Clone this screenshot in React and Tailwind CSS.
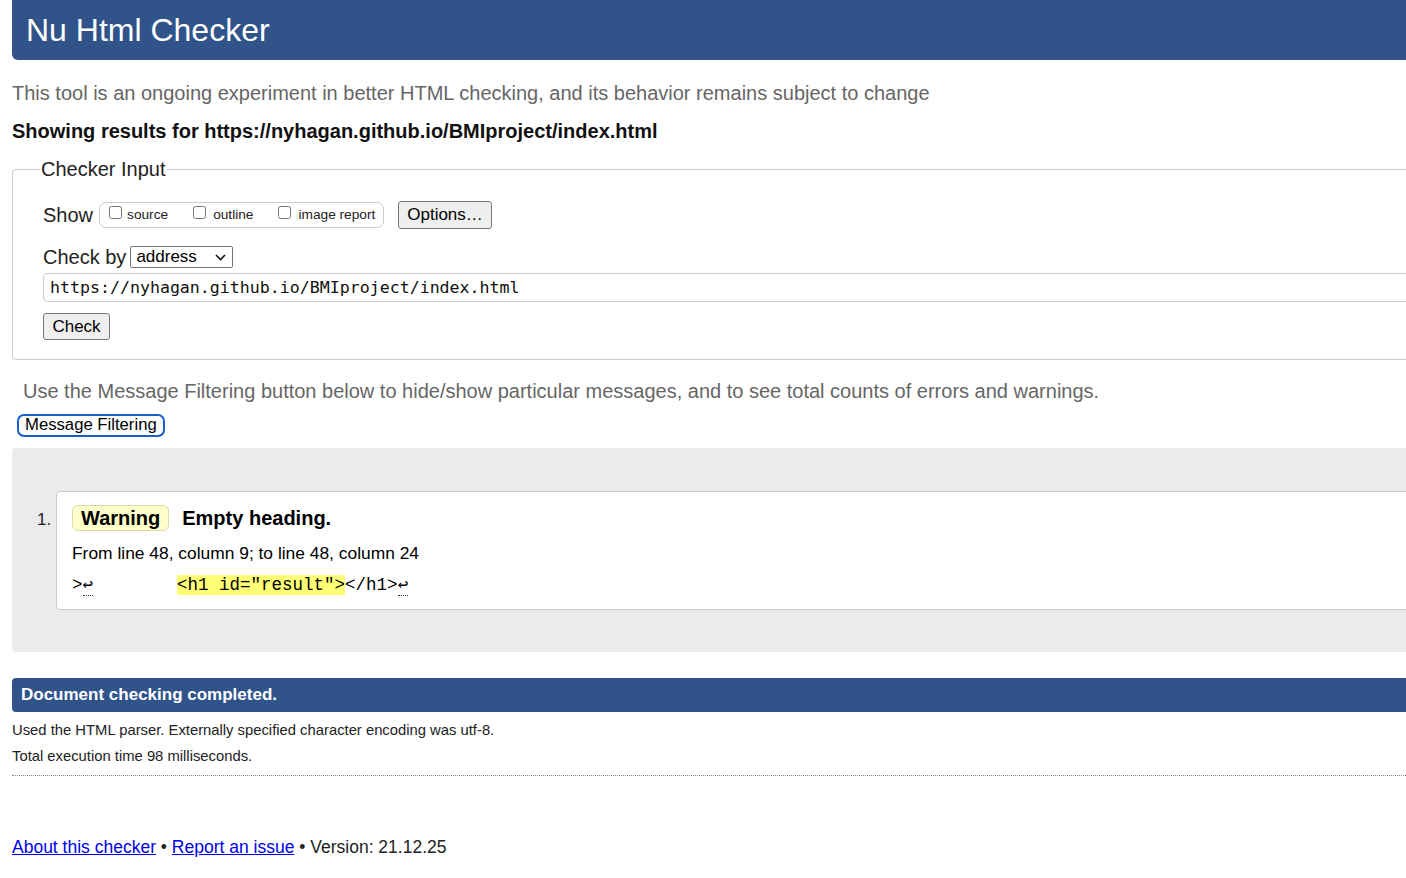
import React from "react";

const sans = "font-['Liberation_Sans','Helvetica',Arial,sans-serif]";

function Header() {
  return (
    <div className="h-[60px] rounded-b-[6px] bg-[#30538a] flex items-center pl-[14px]">
      <h1 className="text-[32px] text-white leading-none">Nu Html Checker</h1>
    </div>
  );
}

function CheckerInput() {
  return (
    <fieldset className="mt-[14px] border border-[#cccccc] rounded-[4px] pl-[30px] pb-[19px]">
      <legend className="-ml-[3px] px-[1px] text-[20px] leading-[24px] text-[#222]">Checker Input</legend>

      <div className="mt-[20px] flex items-center h-[28px]">
        <span className="text-[20px] text-[#222]">Show</span>
        <div className="ml-[6px] h-[26px] w-[285px] border border-[#cccccc] rounded-[7px] flex items-center pl-[9px] text-[13.7px] text-[#222]">
          <label className="flex items-center">
            <input type="checkbox" className="m-0 w-[13px] h-[13px] -mt-[5px]" />
            <span className="ml-[5px]">source</span>
          </label>
          <label className="flex items-center ml-[25px]">
            <input type="checkbox" className="m-0 w-[13px] h-[13px] -mt-[5px]" />
            <span className="ml-[7px]">outline</span>
          </label>
          <label className="flex items-center ml-[25px]">
            <input type="checkbox" className="m-0 w-[13px] h-[13px] -mt-[5px]" />
            <span className="ml-[7px]">image report</span>
          </label>
        </div>
        <button className="ml-[14px] h-[28px] w-[94px] bg-[#efefef] border border-[#767676] rounded-[3px] text-[17px] text-black">
          Options…
        </button>
      </div>

      <div className="mt-[16px] flex items-center h-[24px]">
        <span className="text-[20px] text-[#222]">Check by</span>
        <div className="ml-[4px] h-[22px] w-[103px] border border-[#767676] rounded-[2px] bg-white flex items-center justify-between pl-[5px] pr-[6px] text-[17px] text-black">
          <span>address</span>
          <svg width="11" height="7" viewBox="0 0 11 7" fill="none">
            <path d="M1 1l4.5 4.5L10 1" stroke="#111" strokeWidth="1.6" />
          </svg>
        </div>
      </div>

      <div className="mt-[4px] h-[29px] border border-[#cccccc] rounded-[4px] flex items-center pl-[6px] pt-[2px] font-['DejaVu_Sans_Mono',monospace] text-[16.6px] text-[#111]">
        https://nyhagan.github.io/BMIproject/index.html
      </div>

      <button className="mt-[11px] block h-[27px] w-[67px] bg-[#efefef] border border-[#767676] rounded-[3px] text-[17px] text-black">
        Check
      </button>
    </fieldset>
  );
}

function Results() {
  return (
    <div className="mt-[11px] rounded-[4px] bg-[#ebebeb] pt-[43px] pb-[42px] flex">
      <div className="w-[44px] pl-[25px] pt-[16px] text-[17px] text-[#222]">1.</div>
      <div className="flex-1 bg-white border border-[#cccccc] rounded-[4px] pl-[15px] pt-[11px] pb-[14px]">
        <div className="flex items-center">
          <span className="h-[26px] flex items-center px-[8px] bg-[#ffffcc] border border-[#ddd9a8] rounded-[6px] text-[20px] font-bold text-black">
            Warning
          </span>
          <span className="ml-[13px] text-[20px] font-bold text-black">Empty heading.</span>
        </div>
        <p className="mt-[9px] text-[17.4px] leading-[22px] text-black">From line 48, column 9; to line 48, column 24</p>
        <div className="mt-[11px] font-['Liberation_Mono',monospace] text-[17.5px] leading-[20px] text-black whitespace-pre">
          {">"}
          <span className="border-b border-dotted border-[#333]">↩</span>
          {"        "}
          <span className="bg-[#ffff77]">{'<h1 id="result">'}</span>
          {"</h1>"}
          <span className="border-b border-dotted border-[#333]">↩</span>
        </div>
      </div>
    </div>
  );
}

export default function App() {
  return (
    <div className={`${sans} min-h-screen bg-white overflow-hidden`}>
      <div className="w-[1430px] pl-[12px]">
        <Header />
        <p className="mt-[21px] text-[20px] leading-[24px] text-[#666]">
          This tool is an ongoing experiment in better HTML checking, and its behavior remains subject to change
        </p>
        <p className="mt-[14px] text-[20px] leading-[24px] font-bold text-[#111]">
          Showing results for https://nyhagan.github.io/BMIproject/index.html
        </p>

        <CheckerInput />

        <p className="mt-[19px] pl-[11px] text-[20px] leading-[24px] text-[#666]">
          Use the Message Filtering button below to hide/show particular messages, and to see total counts of errors and warnings.
        </p>
        <button className="mt-[11px] ml-[5px] block h-[23px] px-[6px] border-2 border-[#1a5fc6] rounded-[7px] text-[16.7px] leading-none text-black bg-white">
          Message Filtering
        </button>

        <Results />

        <div className="mt-[26px] h-[34px] rounded-[4px] bg-[#30538a] flex items-center pl-[9px] text-[17px] font-bold text-white">
          Document checking completed.
        </div>
        <div className="border-b border-dotted border-[#888] pb-[9px]">
          <p className="mt-[8px] text-[14.8px] leading-[20px] text-[#222]">
            Used the HTML parser. Externally specified character encoding was utf-8.
          </p>
          <p className="mt-[6px] text-[14.8px] leading-[20px] text-[#222]">Total execution time 98 milliseconds.</p>
        </div>

        <p className="mt-[60px] text-[17.5px] leading-[22px] text-[#222]">
          <a href="#" className="text-[#0000ee] underline">About this checker</a>
          {" • "}
          <a href="#" className="text-[#0000ee] underline">Report an issue</a>
          {" • Version: 21.12.25"}
        </p>
      </div>
    </div>
  );
}
